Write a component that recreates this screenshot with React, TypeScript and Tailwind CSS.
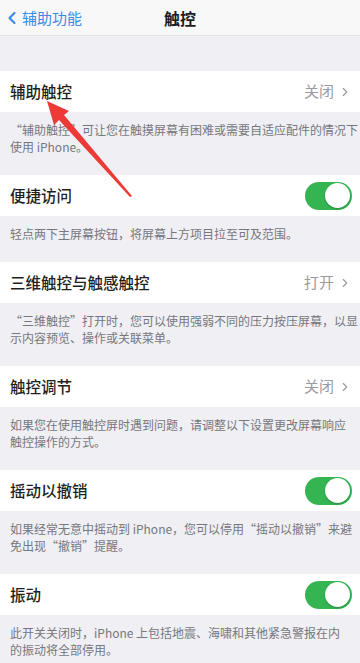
import { ChevronLeft, ChevronRight } from 'lucide-react';

type Item = {
  title: string;
  value?: string;
  toggle?: boolean;
  footer: string[];
};

const items: Item[] = [
  {
    title: '辅助触控',
    value: '关闭',
    footer: ['“辅助触控”可让您在触摸屏幕有困难或需要自适应配件的情况下', '使用 iPhone。'],
  },
  {
    title: '便捷访问',
    toggle: true,
    footer: ['轻点两下主屏幕按钮，将屏幕上方项目拉至可及范围。'],
  },
  {
    title: '三维触控与触感触控',
    value: '打开',
    footer: ['“三维触控”打开时，您可以使用强弱不同的压力按压屏幕，以显', '示内容预览、操作或关联菜单。'],
  },
  {
    title: '触控调节',
    value: '关闭',
    footer: ['如果您在使用触控屏时遇到问题，请调整以下设置更改屏幕响应', '触控操作的方式。'],
  },
  {
    title: '摇动以撤销',
    toggle: true,
    footer: ['如果经常无意中摇动到 iPhone，您可以停用“摇动以撤销”来避', '免出现“撤销”提醒。'],
  },
  {
    title: '振动',
    toggle: true,
    footer: ['此开关关闭时，iPhone 上包括地震、海啸和其他紧急警报在内', '的振动将全部停用。'],
  },
];

function Toggle() {
  return (
    <div className="w-[47px] h-[28px] rounded-full bg-[#34b552] flex items-center justify-end pr-[2px]">
      <div className="w-[25px] h-[25px] rounded-full bg-white shadow-[0_1px_2px_rgba(0,0,0,0.25)]" />
    </div>
  );
}

export default function App() {
  return (
    <div
      className="relative w-[360px] h-[663px] overflow-hidden bg-[#efeff4]"
      style={{ fontFamily: '"Noto Sans CJK SC", "Noto Sans", sans-serif' }}
    >
      {/* Nav bar */}
      <div className="relative h-[36px] bg-[#f8f8f9] border-b border-[#e2e2e6] flex items-center">
        <div className="flex items-center text-[#3b8ae6] pl-[2px]">
          <ChevronLeft className="w-[20px] h-[24px]" strokeWidth={2.6} />
          <span className="text-[15px] leading-none">辅助功能</span>
        </div>
        <span className="absolute left-1/2 -translate-x-1/2 text-[16px] font-semibold text-[#1c1c1e] leading-none">
          触控
        </span>
      </div>

      <div className="h-[35px]" />

      {items.map((item) => (
        <div key={item.title}>
          <div className="h-[41px] bg-white flex items-center justify-between pl-[10px] pr-[8px]">
            <span className="text-[15.5px] text-[#1f1f21] font-medium">{item.title}</span>
            {item.toggle ? (
              <Toggle />
            ) : (
              <div className="flex items-center gap-[4px] text-[#9a9aa0]">
                <span className="text-[15px]">{item.value}</span>
                <ChevronRight className="w-[14px] h-[16px]" strokeWidth={2} />
              </div>
            )}
          </div>
          <div className="pt-[9px] pb-[20px] pl-[10px] pr-[6px] text-[12px] leading-[17px] text-[#77777c] whitespace-nowrap">
            {item.footer.map((line) => (
              <div key={line}>{line}</div>
            ))}
          </div>
        </div>
      ))}

      {/* Red annotation arrow */}
      <svg
        className="absolute left-0 top-0 pointer-events-none"
        width="360"
        height="663"
        viewBox="0 0 360 663"
      >
        <polygon
          points="47,101 69,111 64,115 132,196 130,197 59,120 54,125"
          fill="#ee3a36"
        />
      </svg>
    </div>
  );
}
